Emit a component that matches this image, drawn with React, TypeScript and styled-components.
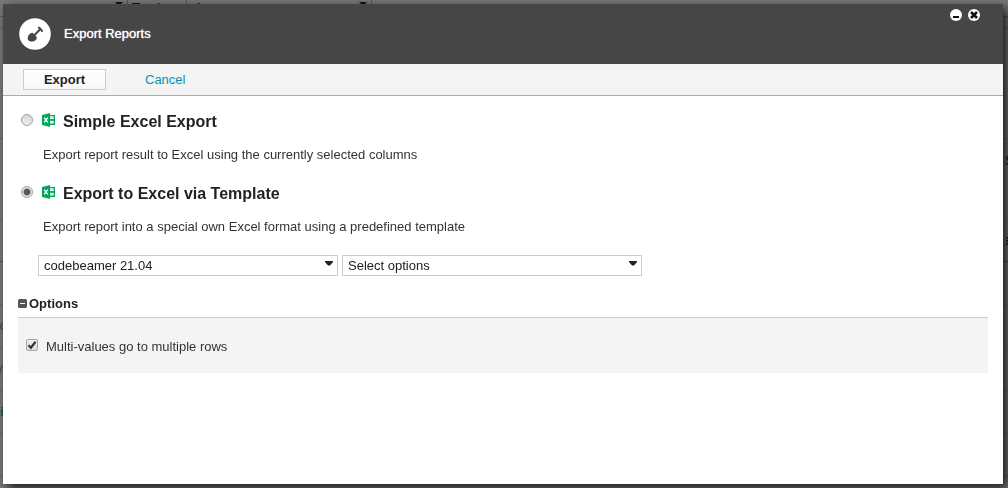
import React, { useState } from "react";
import styled, { createGlobalStyle } from "styled-components";

const GlobalStyle = createGlobalStyle`
  * { box-sizing: border-box; }
  body {
    margin: 0;
    background: #787878;
    font: 13px/16px "Liberation Sans", Arial, sans-serif;
    color: #222;
    overflow: hidden;
  }
`;

const ReportPage = styled.div`
  height: 100vh;
  overflow: hidden;
`;

const FilterBar = styled.div`
  display: flex;
  height: 17px;
  border-bottom: 1px solid #5c5c5c;
  color: #111;
`;

const FilterCell = styled.div<{ $width: number }>`
  width: ${(p) => p.$width}px;
  padding: 0 4px;
  display: flex;
  justify-content: space-between;
  border-right: 1px solid #595959;
`;

const FilterCaret = styled.svg`
  width: 8px;
  height: 4px;
  margin-left: auto;
`;

const PageBand = styled.div<{ $height: number }>`
  height: ${(p) => p.$height}px;
  border-bottom: 1px solid #626262;
`;

const ReportRow = styled.div<{ $height?: number; $strong?: boolean }>`
  display: flex;
  align-items: center;
  justify-content: space-between;
  height: ${(p) => p.$height ?? 43}px;
  border-bottom: 1px solid ${(p) => (p.$strong ? "#505050" : "#686868")};
  color: #14536a;
`;

const RowStart = styled.span`
  margin-left: -4px;
`;

const RowEnd = styled.span`
  align-self: flex-start;
  width: 3px;
  margin: 14px 0 0 auto;
  color: #111;
`;

const RowMenu = styled.svg`
  width: 3px;
  height: 10px;
  margin-left: auto;
`;

const Dialog = styled.section`
  position: fixed;
  inset: 4px 5px 4px 3px;
  display: flex;
  flex-direction: column;
  background: #fff;
  box-shadow: 4px 4px 10px rgba(0, 0, 0, 0.8);
`;

const TitleBar = styled.header`
  display: flex;
  align-items: center;
  height: 60px;
  flex: none;
  padding: 0 16px;
  background: #464646;
  color: #fff;
`;

const TitleIcon = styled.svg`
  width: 32px;
  height: 32px;
  margin-right: 13px;
`;

const Title = styled.h1`
  margin: 0;
  font-size: 13px;
  font-weight: 400;
  text-shadow: 0 0 1px #fff;
`;

const WindowButtons = styled.div`
  display: flex;
  align-self: flex-start;
  gap: 6px;
  margin: 5px 7px 0 auto;
`;

const WindowButton = styled.button`
  width: 12px;
  height: 12px;
  padding: 0;
  border: 0;
  background: none;
  svg { display: block; }
`;

const Toolbar = styled.div`
  display: flex;
  align-items: center;
  gap: 39px;
  height: 32px;
  flex: none;
  padding: 0 20px;
  background: #f4f4f4;
  border-bottom: 1px solid #ababab;
`;

const ExportButton = styled.button`
  width: 83px;
  height: 21px;
  padding: 0;
  border: 1px solid #ccc;
  background: linear-gradient(#fff, #f8f8f8);
  color: #222;
  font: 700 13px/16px "Liberation Sans", Arial, sans-serif;
`;

const CancelLink = styled.a`
  color: #0093b8;
  text-decoration: none;
`;

const Content = styled.div`
  padding: 17px 15px;
`;

const Choice = styled.div`
  height: 72px;
  padding-left: 3px;
`;

const ChoiceLabel = styled.label`
  display: flex;
  align-items: center;
  height: 18px;
  font-size: 16px;
  font-weight: 700;
`;

const Radio = styled.input`
  appearance: none;
  width: 12px;
  height: 12px;
  margin: 0 9px 4px 0;
  border: 1px solid #a0a0a0;
  border-radius: 50%;
  background: linear-gradient(#d8d8d8, #ededed);
  &:checked {
    background: radial-gradient(circle, #555 0 2px, #666 3px, #e4e4e4 4px);
  }
`;

const ExcelGlyph = styled.svg`
  width: 13px;
  height: 14px;
  margin: 0 8px 4px 0;
`;

const Hint = styled.p`
  margin: 16px 0 0 22px;
  color: #333;
`;

const SelectRow = styled.div`
  display: flex;
  gap: 4px;
  padding-left: 20px;
  margin: -2px 0 20px;
`;

const SelectBox = styled.div`
  position: relative;
  width: 300px;
`;

const Select = styled.select`
  appearance: none;
  display: block;
  width: 100%;
  height: 21px;
  padding: 0 5px;
  border: 1px solid #ccc;
  border-radius: 0;
  background: #fff;
  color: #222;
  font: 13px/16px "Liberation Sans", Arial, sans-serif;
`;

const SelectCaret = styled.svg`
  position: absolute;
  top: 6px;
  right: 5px;
  width: 8px;
  height: 5px;
  pointer-events: none;
`;

const OptionsToggle = styled.button`
  display: flex;
  align-items: center;
  gap: 2px;
  height: 16px;
  padding: 0;
  border: 0;
  background: none;
  color: #222;
  font: 700 13px/16px "Liberation Sans", Arial, sans-serif;
  svg { margin-bottom: 1px; }
`;

const OptionsPanel = styled.div`
  margin-top: 5px;
  padding: 21px 8px;
  height: 56px;
  background: #f4f4f4;
  border-top: 1px solid #ccc;
`;

const CheckLabel = styled.label`
  display: flex;
  align-items: center;
  color: #333;
`;

const CheckHolder = styled.span`
  display: grid;
  width: 12px;
  height: 12px;
  margin: 0 8px 4px 0;
  > * { grid-area: 1 / 1; }
`;

const Checkbox = styled.input`
  appearance: none;
  width: 12px;
  height: 12px;
  margin: 0;
  border: 1px solid #a6a6a6;
  border-radius: 2px;
  background: linear-gradient(#eee, #dedede);
  & + svg { visibility: hidden; pointer-events: none; }
  &:checked + svg { visibility: visible; }
`;

const ExcelIcon = () => (
  <ExcelGlyph viewBox="0 0 13 14" aria-hidden="true">
    <path d="M8 2h5v10H8z" fill="#00a65a" />
    <path d="M8 3.300h3.700v2.900H8zM8 7.600h3.700v3H8z" fill="#fff" />
    <path d="M8 4.300h2.500v1H8zM8 8.600h2.500v1H8z" fill="#00a65a" opacity="0.400" />
    <path d="M8 6.300h4v1.300H8z" fill="#00a65a" />
    <path d="M0 2L8 0v14L0 12z" fill="#00a65a" />
    <path d="M2.200 4.600L5.800 9.400M5.800 4.600L2.200 9.400" stroke="#fff" strokeWidth="1.300" />
  </ExcelGlyph>
);

const TemplateSelect = ({ label, options }: { label: string; options: string[] }) => (
  <SelectBox>
    <Select aria-label={label}>
      {options.map((o) => <option key={o}>{o}</option>)}
    </Select>
    <SelectCaret viewBox="0 0 8 5" aria-hidden="true">
      <path d="M0 0h8v1L5 4.500H3L0 1z" fill="#222" />
    </SelectCaret>
  </SelectBox>
);

const Caret = () => (
  <FilterCaret viewBox="0 0 8 4" aria-hidden="true">
    <path d="M0 2h8L6 4H2z" fill="#111" />
  </FilterCaret>
);

export default function App() {
  const [mode, setMode] = useState("template");
  const [open, setOpen] = useState(true);
  return (
    <>
      <GlobalStyle />
      <ReportPage aria-hidden="true">
        <FilterBar>
          <FilterCell $width={128}><Caret /></FilterCell>
          <FilterCell $width={59}>Tracker</FilterCell>
          <FilterCell $width={185}>&nbsp;A<Caret /></FilterCell>
        </FilterBar>
        <PageBand $height={11} />
        <PageBand $height={111} />
        <ReportRow $height={82}><RowEnd>S</RowEnd></ReportRow>
        <ReportRow $height={41} $strong>
          <RowMenu viewBox="0 0 3 10">
            <path d="M1 1h2v2H1zM1 4h2v2H1zM1 7h2v2H1z" fill="#333" />
          </RowMenu>
        </ReportRow>
        <ReportRow />
        <ReportRow><RowStart>to</RowStart></ReportRow>
        <ReportRow><RowStart>y</RowStart></ReportRow>
        <ReportRow><b>i</b></ReportRow>
        <ReportRow />
      </ReportPage>
      <Dialog role="dialog" aria-labelledby="dialog-title">
        <TitleBar>
          <TitleIcon viewBox="0 0 32 32" aria-hidden="true">
            <circle cx="16" cy="16" r="15.800" fill="#fff" />
            <path d="M14 18.500L21.500 11" stroke="#464646" strokeWidth="2" />
            <path d="M18.600 9.600l1.200-1.200 1.400.900 2.100 2.200.900 1.700-1.300 1.100-1.700-2-1.300-1.200z" fill="#464646" />
            <path d="M11.500 15.200l2-.400 4 4 .300 2-1.600 1.600c-1.500 1.300-4.200 1.400-6 .500-2-1-1.700-3.800-.800-5.500z" fill="#464646" />
          </TitleIcon>
          <Title id="dialog-title">Export Reports</Title>
          <WindowButtons>
            <WindowButton aria-label="Minimize">
              <svg width="12" height="12" viewBox="0 0 12 12">
                <circle cx="6" cy="6" r="6" fill="#fff" />
                <path d="M3 7h6v2H3z" fill="#111" />
              </svg>
            </WindowButton>
            <WindowButton aria-label="Close">
              <svg width="12" height="12" viewBox="0 0 12 12">
                <circle cx="6" cy="6" r="6" fill="#fff" />
                <path d="M3 3l6 6M9 3L3 9" stroke="#111" strokeWidth="2.600" />
              </svg>
            </WindowButton>
          </WindowButtons>
        </TitleBar>
        <Toolbar>
          <ExportButton>Export</ExportButton>
          <CancelLink href="#">Cancel</CancelLink>
        </Toolbar>
        <Content>
          <Choice>
            <ChoiceLabel>
              <Radio type="radio" name="mode" checked={mode === "simple"} onChange={() => setMode("simple")} />
              <ExcelIcon />
              Simple Excel Export
            </ChoiceLabel>
            <Hint>Export report result to Excel using the currently selected columns</Hint>
          </Choice>
          <Choice>
            <ChoiceLabel>
              <Radio type="radio" name="mode" checked={mode === "template"} onChange={() => setMode("template")} />
              <ExcelIcon />
              Export to Excel via Template
            </ChoiceLabel>
            <Hint>Export report into a special own Excel format using a predefined template</Hint>
          </Choice>
          <SelectRow>
            <TemplateSelect label="Template group" options={["codebeamer 21.04"]} />
            <TemplateSelect label="Template" options={["Select options"]} />
          </SelectRow>
          <OptionsToggle aria-expanded={open} onClick={() => setOpen(!open)}>
            <svg width="9" height="9" viewBox="0 0 9 9" aria-hidden="true">
              <rect width="9" height="9" rx="1.500" fill="#555" />
              <path d="M2 4h5v1H2z" fill="#fff" />
            </svg>
            Options
          </OptionsToggle>
          {open && (
            <OptionsPanel>
              <CheckLabel>
                <CheckHolder>
                  <Checkbox type="checkbox" defaultChecked />
                  <svg width="12" height="12" viewBox="0 0 12 12" aria-hidden="true">
                    <path d="M2.500 6.200l2.400 2.500L9.500 2.800" fill="none" stroke="#333" strokeWidth="2.200" />
                  </svg>
                </CheckHolder>
                Multi-values go to multiple rows
              </CheckLabel>
            </OptionsPanel>
          )}
        </Content>
      </Dialog>
    </>
  );
}
